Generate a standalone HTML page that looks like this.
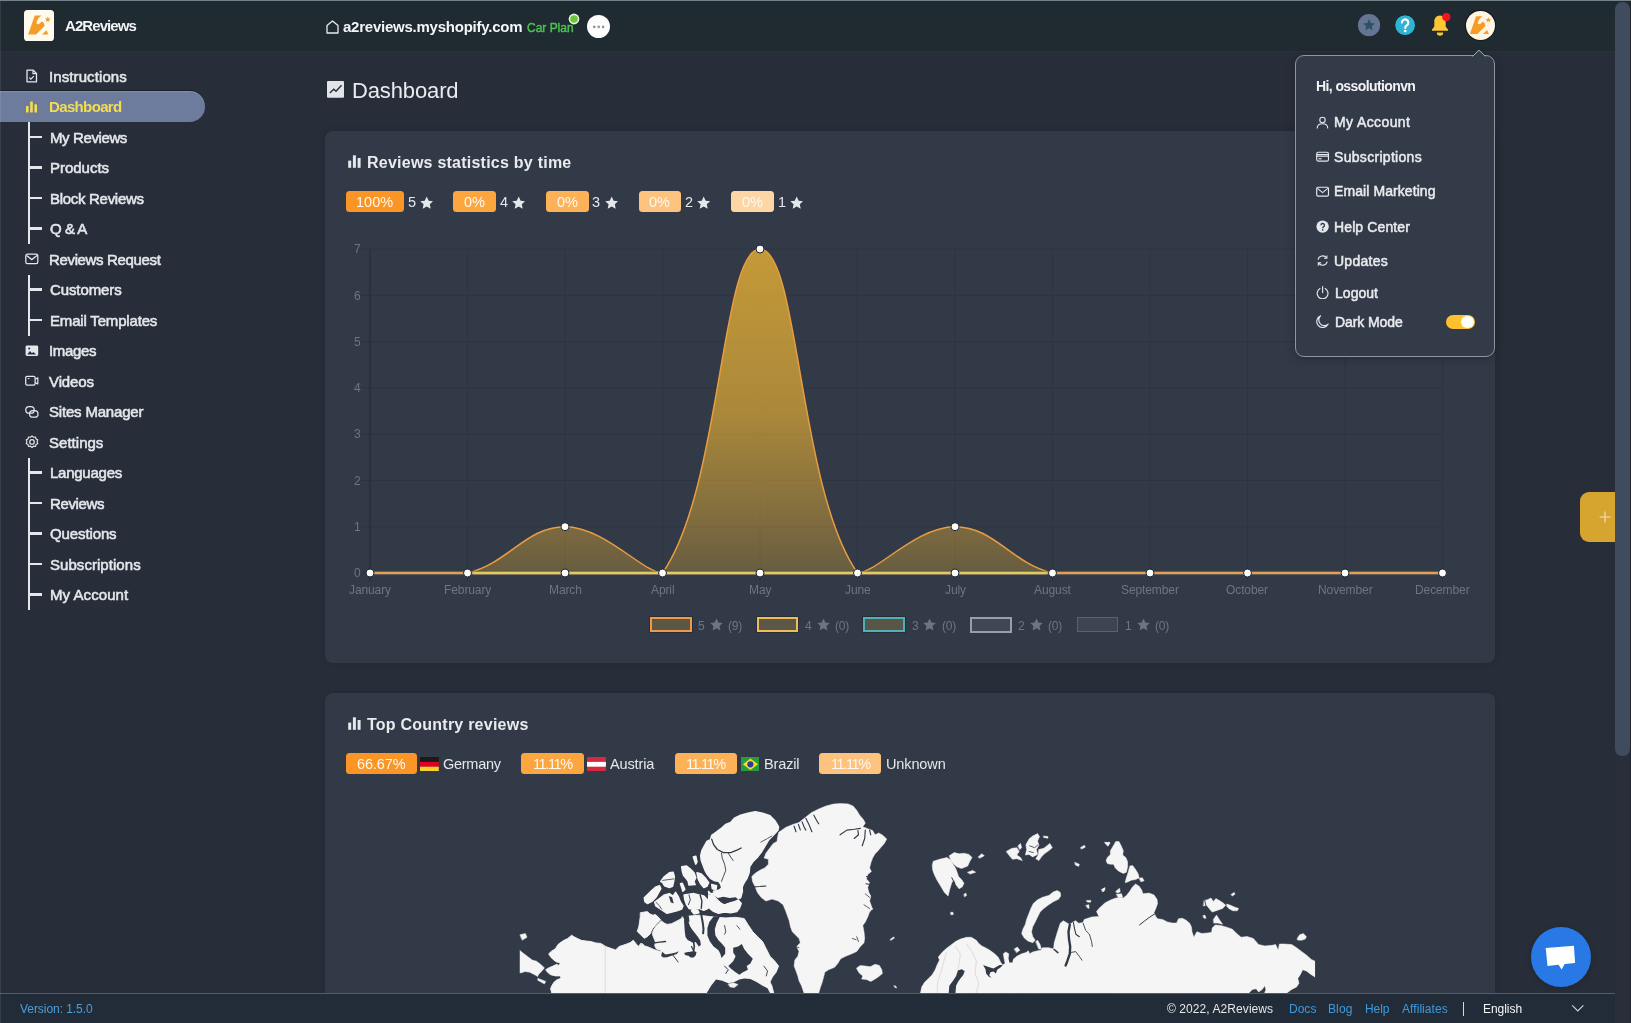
<!DOCTYPE html>
<html><head><meta charset="utf-8"><title>A2Reviews Dashboard</title>
<style>
html,body{margin:0;padding:0}
body{width:1631px;height:1023px;overflow:hidden;background:#282e39;font-family:"Liberation Sans", sans-serif;position:relative}
#root{position:absolute;left:0;top:0;width:1631px;height:1023px;overflow:hidden}
span{will-change:transform}
</style></head><body><div id="root"><div style="position:absolute;left:0px;top:0px;width:1631px;height:1px;background:#74828a;"></div><div style="position:absolute;left:0px;top:1px;width:1631px;height:50px;background:#1f2a31;"></div><div style="position:absolute;left:0px;top:51px;width:1631px;height:1px;background:#2b323d;"></div><div style="position:absolute;left:325px;top:131px;width:1170px;height:532px;background:#333a47;border-radius:8px;box-shadow:0 0 7px rgba(0,0,0,.13);"></div><div style="position:absolute;left:325px;top:693px;width:1170px;height:320px;background:#333a47;border-radius:8px 8px 0 0;box-shadow:0 0 7px rgba(0,0,0,.13);"></div><div style="position:absolute;left:23.5px;top:10.4px;width:30.8px;height:30.8px;border-radius:3.6px;background:#fffaee;overflow:hidden">
<svg width="30.8" height="30.8" viewBox="0 0 30.7 30.7"><path d="M10.7 5.5 L17.5 5.5 C14.6 7.4 13 10 12.3 13.5 L14.8 14.1 L17.6 11.5 L19.6 12.7 L20.7 15.6 L12.1 24.3 L4.1 24.3 Z" fill="#f59b27"/><path d="M18 24.3 L22.3 20.1 L24.3 24.3 Z" fill="#f59b27"/><path d="M23.7 6.5 l.85 1.85 l2.0 .22 l-1.5 1.36 l.42 2.0 l-1.77 -1.02 l-1.77 1.02 l.42 -2.0 l-1.5 -1.36 l2.0 -.22z" fill="#f59b27"/></svg></div><svg style="position:absolute;left:325.5px;top:20px" width="13" height="14" viewBox="0 0 13 14"><path d="M1 5.6 L6.5 1 L12 5.6 V13 H1 Z" fill="none" stroke="#e9ecef" stroke-width="1.3" stroke-linejoin="round"/></svg><svg style="position:absolute;left:566.5px;top:11.6px" width="14" height="14" viewBox="0 0 14 14"><circle cx="7" cy="7" r="6.3" fill="#18222a"/><circle cx="7" cy="7" r="5.4" fill="#e6f4e0"/><circle cx="7" cy="7" r="3.8" fill="#6cc63c"/></svg><div style="position:absolute;left:587px;top:14.6px;width:23.2px;height:23.2px;border-radius:50%;background:#fdfdfd"></div>
<svg style="position:absolute;left:587px;top:14.6px" width="23.2" height="23.2" viewBox="0 0 23.2 23.2"><circle cx="7.3" cy="11.9" r="1.35" fill="#96979c"/><circle cx="11.7" cy="11.9" r="1.35" fill="#96979c"/><circle cx="16.1" cy="11.9" r="1.35" fill="#96979c"/></svg><svg style="position:absolute;left:1357px;top:14px" width="24" height="24" viewBox="0 0 24 24"><circle cx="12" cy="11.2" r="11.1" fill="#647594"/><path d="M12 5.3 l1.75 3.7 l4.05 .5 l-3 2.8 l.8 4 l-3.6 -2 l-3.6 2 l.8 -4 l-3 -2.8 l4.05 -.5z" fill="#2d5162"/></svg><svg style="position:absolute;left:1393px;top:13px" width="24" height="24" viewBox="0 0 24 24"><circle cx="12.1" cy="12.2" r="10.4" fill="#2fb4d6" stroke="#17232b" stroke-width="1"/><path d="M8.9 9.6 a3.2 3.2 0 1 1 4.9 2.7 c-1.2 .8 -1.6 1.3 -1.6 2.6" fill="none" stroke="#fff" stroke-width="2.1" stroke-linecap="round"/><circle cx="12.2" cy="18" r="1.35" fill="#fff"/></svg><svg style="position:absolute;left:1429px;top:12px" width="24" height="28" viewBox="0 0 24 28"><path d="M11 3.5 c-3.6 0 -5.7 2.8 -5.7 6.2 v4.2 c0 1.2 -.9 2 -2 3 c-.8 .7 -.3 1.9 .7 1.9 h14 c1 0 1.5 -1.2 .7 -1.9 c-1.1 -1 -2 -1.8 -2 -3 v-4.2 c0 -3.4 -2.1 -6.2 -5.7 -6.2z" fill="#fdc632"/><path d="M7.8 20.6 h6.4 a3.2 3.2 0 0 1 -6.4 0z" fill="#fdc632"/><circle cx="17.3" cy="5.1" r="4.1" fill="#f4121d"/></svg><div style="position:absolute;left:1465.5px;top:11.2px;width:29px;height:29px;border-radius:50%;background:#fff5e3;box-shadow:0 0 0 1.2px #141c22;overflow:hidden">
<svg width="29" height="29" viewBox="0 0 30.7 30.7"><path d="M10.7 5.5 L17.5 5.5 C14.6 7.4 13 10 12.3 13.5 L14.8 14.1 L17.6 11.5 L19.6 12.7 L20.7 15.6 L12.1 24.3 L4.1 24.3 Z" fill="#f59b27"/><path d="M18 24.3 L22.3 20.1 L24.3 24.3 Z" fill="#f59b27"/><path d="M23.7 6.5 l.85 1.85 l2.0 .22 l-1.5 1.36 l.42 2.0 l-1.77 -1.02 l-1.77 1.02 l.42 -2.0 l-1.5 -1.36 l2.0 -.22z" fill="#f59b27"/></svg></div><div style="position:absolute;left:0px;top:91.3px;width:205px;height:30.7px;background:#6d7c9d;border-radius:0 15.3px 15.3px 0;box-shadow:0 -1px 0 rgba(12,16,28,.5), inset 0 1.2px 0 rgba(255,255,255,.13);"></div><svg style="position:absolute;left:24.7px;top:69.0px" width="14" height="14" viewBox="0 0 14 14"><path d="M2 1.2 h6.2 l3.3 3.3 v8.3 h-9.5z" fill="none" stroke="#e4e7eb" stroke-width="1.3" stroke-linejoin="round"/><path d="M8 1.4 v3.3 h3.3" fill="none" stroke="#e4e7eb" stroke-width="1.2"/><path d="M4.3 8.6 l1.6 1.6 l2.9 -3" fill="none" stroke="#e4e7eb" stroke-width="1.2"/></svg><svg style="position:absolute;left:24.7px;top:99.5px" width="14" height="14" viewBox="0 0 14 14"><rect x="1" y="6" width="2.6" height="6.6" rx=".6" fill="#f3dc52"/><rect x="5.2" y="1.6" width="2.6" height="11" rx=".6" fill="#f3dc52"/><rect x="9.4" y="4.2" width="2.6" height="8.4" rx=".6" fill="#f3dc52"/></svg><div style="position:absolute;left:30px;top:135.8px;width:12px;height:2.4px;background:#e4e7eb;"></div><div style="position:absolute;left:30px;top:166.3px;width:12px;height:2.4px;background:#e4e7eb;"></div><div style="position:absolute;left:30px;top:196.8px;width:12px;height:2.4px;background:#e4e7eb;"></div><div style="position:absolute;left:30px;top:227.3px;width:12px;height:2.4px;background:#e4e7eb;"></div><svg style="position:absolute;left:24.7px;top:252.0px" width="14" height="14" viewBox="0 0 14 14"><rect x=".8" y="2.2" width="12" height="9.4" rx="1.6" fill="none" stroke="#e4e7eb" stroke-width="1.25"/><path d="M1.6 3.6 l5.2 4 l5.2 -4" fill="none" stroke="#e4e7eb" stroke-width="1.25"/></svg><div style="position:absolute;left:30px;top:288.3px;width:12px;height:2.4px;background:#e4e7eb;"></div><div style="position:absolute;left:30px;top:318.8px;width:12px;height:2.4px;background:#e4e7eb;"></div><svg style="position:absolute;left:24.7px;top:343.5px" width="14" height="14" viewBox="0 0 14 14"><rect x=".6" y="1.6" width="12.6" height="10.4" rx="1.4" fill="#e4e7eb"/><path d="M2.2 10.4 l2.8 -3.3 l2 2.1 l1.3 -1.2 l3 2.4z" fill="#282e39"/><circle cx="4.2" cy="4.6" r="1" fill="#282e39"/></svg><svg style="position:absolute;left:24.7px;top:374.0px" width="14" height="14" viewBox="0 0 14 14"><rect x=".7" y="2.4" width="9.4" height="8.8" rx="1.4" fill="none" stroke="#e4e7eb" stroke-width="1.25"/><path d="M10.2 5.2 l2.6 -1.4 v6.2 l-2.6 -1.4" fill="none" stroke="#e4e7eb" stroke-width="1.2" stroke-linejoin="round"/><path d="M2.8 4.6 h1.6" stroke="#e4e7eb" stroke-width="1.1"/></svg><svg style="position:absolute;left:24.7px;top:404.5px" width="14" height="14" viewBox="0 0 14 14"><rect x=".8" y="1.6" width="8.4" height="6.6" rx="3.3" fill="none" stroke="#e4e7eb" stroke-width="1.25"/><rect x="4.6" y="5.6" width="8.4" height="6.6" rx="3.3" fill="none" stroke="#e4e7eb" stroke-width="1.25"/></svg><svg style="position:absolute;left:24.7px;top:435.0px" width="14" height="14" viewBox="0 0 14 14"><path d="M7 .9 l1.5 1.3 l2 -.2 l.5 1.9 l1.8 .9 l-.7 1.9 l.7 1.9 l-1.8 .9 l-.5 1.9 l-2 -.2 l-1.5 1.3 l-1.5 -1.3 l-2 .2 l-.5 -1.9 l-1.8 -.9 l.7 -1.9 l-.7 -1.9 l1.8 -.9 l.5 -1.9 l2 .2z" fill="none" stroke="#e4e7eb" stroke-width="1.15" stroke-linejoin="round"/><circle cx="7" cy="6.9" r="2.3" fill="none" stroke="#e4e7eb" stroke-width="1.15"/></svg><div style="position:absolute;left:30px;top:471.3px;width:12px;height:2.4px;background:#e4e7eb;"></div><div style="position:absolute;left:30px;top:501.8px;width:12px;height:2.4px;background:#e4e7eb;"></div><div style="position:absolute;left:30px;top:532.3px;width:12px;height:2.4px;background:#e4e7eb;"></div><div style="position:absolute;left:30px;top:562.8px;width:12px;height:2.4px;background:#e4e7eb;"></div><div style="position:absolute;left:30px;top:593.3px;width:12px;height:2.4px;background:#e4e7eb;"></div><div style="position:absolute;left:27.7px;top:122px;width:2.4px;height:122px;background:#e4e7eb;"></div><div style="position:absolute;left:27.7px;top:274.5px;width:2.4px;height:61.0px;background:#e4e7eb;"></div><div style="position:absolute;left:27.7px;top:457.5px;width:2.4px;height:152.5px;background:#e4e7eb;"></div><svg style="position:absolute;left:327.4px;top:81.1px" width="17" height="16.8" viewBox="0 0 17 16.8"><rect x="0" y="0" width="17" height="16.8" rx="1" fill="#e2e4e8"/><path d="M2.8 11.9 l4 -3.6 l2.2 2 l4.6 -5" fill="none" stroke="#282e39" stroke-width="1.4"/><circle cx="14" cy="4.8" r=".9" fill="#282e39"/></svg><svg style="position:absolute;left:347.9px;top:155.3px" width="13" height="13" viewBox="0 0 13 13"><rect x=".2" y="5.6" width="3" height="7.2" fill="#e4e7eb"/><rect x="4.9" y=".3" width="3" height="12.5" fill="#e4e7eb"/><rect x="9.6" y="3" width="3" height="9.8" fill="#e4e7eb"/></svg><div style="position:absolute;left:345.8px;top:191.2px;width:58.2px;height:21px;background:#fb9526;border-radius:3.5px;"></div><svg style="position:absolute;left:419.9px;top:195.9px" width="13.4" height="13" viewBox="0 0 13 12.6"><path d="M6.5 .4 l1.9 4.1 l4.4 .5 l-3.3 3 l.9 4.4 l-3.9 -2.2 l-3.9 2.2 l.9 -4.4 l-3.3 -3 l4.4 -.5z" fill="#e4e7eb"/></svg><div style="position:absolute;left:453.2px;top:191.2px;width:42.7px;height:21px;background:#fca640;border-radius:3.5px;"></div><svg style="position:absolute;left:511.79999999999995px;top:195.9px" width="13.4" height="13" viewBox="0 0 13 12.6"><path d="M6.5 .4 l1.9 4.1 l4.4 .5 l-3.3 3 l.9 4.4 l-3.9 -2.2 l-3.9 2.2 l.9 -4.4 l-3.3 -3 l4.4 -.5z" fill="#e4e7eb"/></svg><div style="position:absolute;left:545.9px;top:191.2px;width:42.7px;height:21px;background:#fdb258;border-radius:3.5px;"></div><svg style="position:absolute;left:604.5px;top:195.9px" width="13.4" height="13" viewBox="0 0 13 12.6"><path d="M6.5 .4 l1.9 4.1 l4.4 .5 l-3.3 3 l.9 4.4 l-3.9 -2.2 l-3.9 2.2 l.9 -4.4 l-3.3 -3 l4.4 -.5z" fill="#e4e7eb"/></svg><div style="position:absolute;left:638.6px;top:191.2px;width:42.7px;height:21px;background:#fec27f;border-radius:3.5px;"></div><svg style="position:absolute;left:697.2px;top:195.9px" width="13.4" height="13" viewBox="0 0 13 12.6"><path d="M6.5 .4 l1.9 4.1 l4.4 .5 l-3.3 3 l.9 4.4 l-3.9 -2.2 l-3.9 2.2 l.9 -4.4 l-3.3 -3 l4.4 -.5z" fill="#e4e7eb"/></svg><div style="position:absolute;left:731.3px;top:191.2px;width:42.7px;height:21px;background:#fed5a4;border-radius:3.5px;"></div><svg style="position:absolute;left:789.9px;top:195.9px" width="13.4" height="13" viewBox="0 0 13 12.6"><path d="M6.5 .4 l1.9 4.1 l4.4 .5 l-3.3 3 l.9 4.4 l-3.9 -2.2 l-3.9 2.2 l.9 -4.4 l-3.3 -3 l4.4 -.5z" fill="#e4e7eb"/></svg><svg style="position:absolute;left:0;top:0" width="1631" height="700" viewBox="0 0 1631 700"><defs><linearGradient id="g1" gradientUnits="userSpaceOnUse" x1="0" y1="249.0" x2="0" y2="573.0"><stop offset="0" stop-color="rgb(247,186,50)" stop-opacity=".74"/><stop offset=".5" stop-color="rgb(247,186,50)" stop-opacity=".615"/><stop offset=".78" stop-color="rgb(247,186,50)" stop-opacity=".43"/><stop offset="1" stop-color="rgb(247,186,50)" stop-opacity=".27"/></linearGradient></defs><line x1="360.0" y1="573.0" x2="1442.5" y2="573.0" stroke="#2e343f" stroke-width="1"/><line x1="360.0" y1="526.7" x2="1442.5" y2="526.7" stroke="#2e343f" stroke-width="1"/><line x1="360.0" y1="480.4" x2="1442.5" y2="480.4" stroke="#2e343f" stroke-width="1"/><line x1="360.0" y1="434.1" x2="1442.5" y2="434.1" stroke="#2e343f" stroke-width="1"/><line x1="360.0" y1="387.9" x2="1442.5" y2="387.9" stroke="#2e343f" stroke-width="1"/><line x1="360.0" y1="341.6" x2="1442.5" y2="341.6" stroke="#2e343f" stroke-width="1"/><line x1="360.0" y1="295.3" x2="1442.5" y2="295.3" stroke="#2e343f" stroke-width="1"/><line x1="360.0" y1="249.0" x2="1442.5" y2="249.0" stroke="#2e343f" stroke-width="1"/><line x1="370.0" y1="249.00010000000003" x2="370.0" y2="581.0" stroke="#2a303a" stroke-width="1.6"/><line x1="467.5" y1="249.00010000000003" x2="467.5" y2="581.0" stroke="#2e343f" stroke-width="1"/><line x1="565.0" y1="249.00010000000003" x2="565.0" y2="581.0" stroke="#2e343f" stroke-width="1"/><line x1="662.5" y1="249.00010000000003" x2="662.5" y2="581.0" stroke="#2e343f" stroke-width="1"/><line x1="760.0" y1="249.00010000000003" x2="760.0" y2="581.0" stroke="#2e343f" stroke-width="1"/><line x1="857.5" y1="249.00010000000003" x2="857.5" y2="581.0" stroke="#2e343f" stroke-width="1"/><line x1="955.0" y1="249.00010000000003" x2="955.0" y2="581.0" stroke="#2e343f" stroke-width="1"/><line x1="1052.5" y1="249.00010000000003" x2="1052.5" y2="581.0" stroke="#2e343f" stroke-width="1"/><line x1="1150.0" y1="249.00010000000003" x2="1150.0" y2="581.0" stroke="#2e343f" stroke-width="1"/><line x1="1247.5" y1="249.00010000000003" x2="1247.5" y2="581.0" stroke="#2e343f" stroke-width="1"/><line x1="1345.0" y1="249.00010000000003" x2="1345.0" y2="581.0" stroke="#2e343f" stroke-width="1"/><line x1="1442.5" y1="249.00010000000003" x2="1442.5" y2="581.0" stroke="#2e343f" stroke-width="1"/><path d="M370.0 573.0 C409.0 573.0 430.5 573.0 467.5 573.0 C508.5 563.3 526.0 526.7 565.0 526.7 C604.0 526.7 643.6 573.0 662.5 573.0 C721.6 488.8 721.0 249.0 760.0 249.0 C799.0 249.0 798.4 488.8 857.5 573.0 C876.4 573.0 916.0 526.7 955.0 526.7 C994.0 526.7 1011.5 563.3 1052.5 573.0 C1089.5 573.0 1111.0 573.0 1150.0 573.0 C1189.0 573.0 1208.5 573.0 1247.5 573.0 C1286.5 573.0 1306.0 573.0 1345.0 573.0 C1384.0 573.0 1403.5 573.0 1442.5 573.0 L1442.5 573.0 L370.0 573.0Z" fill="url(#g1)"/><path d="M370.0 573.0 C409.0 573.0 430.5 573.0 467.5 573.0 C508.5 563.3 526.0 526.7 565.0 526.7 C604.0 526.7 643.6 573.0 662.5 573.0 C721.6 488.8 721.0 249.0 760.0 249.0 C799.0 249.0 798.4 488.8 857.5 573.0 C876.4 573.0 916.0 526.7 955.0 526.7 C994.0 526.7 1011.5 563.3 1052.5 573.0 C1089.5 573.0 1111.0 573.0 1150.0 573.0 C1189.0 573.0 1208.5 573.0 1247.5 573.0 C1286.5 573.0 1306.0 573.0 1345.0 573.0 C1384.0 573.0 1403.5 573.0 1442.5 573.0" fill="none" stroke="#e99c40" stroke-width="1.5"/><line x1="370.0" y1="571.3" x2="1442.5" y2="571.3" stroke="#2b525c" stroke-width="1" opacity=".75"/><line x1="370.0" y1="574.7" x2="1442.5" y2="574.7" stroke="#3a5686" stroke-width="1" opacity=".55"/><line x1="370.0" y1="573.0" x2="1442.5" y2="573.0" stroke="#e6a14e" stroke-width="2.5"/><line x1="473.5" y1="573.0" x2="1046.5" y2="573.0" stroke="#e3ca5f" stroke-width="2.5"/><circle cx="370.0" cy="573.0" r="4" fill="#fff" stroke="#1c222c" stroke-width="1"/><circle cx="467.5" cy="573.0" r="4" fill="#fff" stroke="#1c222c" stroke-width="1"/><circle cx="565.0" cy="573.0" r="4" fill="#fff" stroke="#1c222c" stroke-width="1"/><circle cx="565.0" cy="526.7" r="4" fill="#fff" stroke="#1c222c" stroke-width="1"/><circle cx="662.5" cy="573.0" r="4" fill="#fff" stroke="#1c222c" stroke-width="1"/><circle cx="760.0" cy="573.0" r="4" fill="#fff" stroke="#1c222c" stroke-width="1"/><circle cx="760.0" cy="249.0" r="4" fill="#fff" stroke="#1c222c" stroke-width="1"/><circle cx="857.5" cy="573.0" r="4" fill="#fff" stroke="#1c222c" stroke-width="1"/><circle cx="955.0" cy="573.0" r="4" fill="#fff" stroke="#1c222c" stroke-width="1"/><circle cx="955.0" cy="526.7" r="4" fill="#fff" stroke="#1c222c" stroke-width="1"/><circle cx="1052.5" cy="573.0" r="4" fill="#fff" stroke="#1c222c" stroke-width="1"/><circle cx="1150.0" cy="573.0" r="4" fill="#fff" stroke="#1c222c" stroke-width="1"/><circle cx="1247.5" cy="573.0" r="4" fill="#fff" stroke="#1c222c" stroke-width="1"/><circle cx="1345.0" cy="573.0" r="4" fill="#fff" stroke="#1c222c" stroke-width="1"/><circle cx="1442.5" cy="573.0" r="4" fill="#fff" stroke="#1c222c" stroke-width="1"/></svg><div style="position:absolute;left:649.8px;top:617px;width:37.800000000000004px;height:10.8px;border:2.4px solid #ee9a46;background:#5c5644;box-shadow:0 0 0 .6px rgba(20,18,16,0.5)"></div><svg style="position:absolute;left:710.0px;top:618px" width="13" height="12.8" viewBox="0 0 13 12.6"><path d="M6.5 .4 l1.9 4.1 l4.4 .5 l-3.3 3 l.9 4.4 l-3.9 -2.2 l-3.9 2.2 l.9 -4.4 l-3.3 -3 l4.4 -.5z" fill="#6e7580"/></svg><div style="position:absolute;left:756.5px;top:617px;width:37.800000000000004px;height:10.8px;border:2.4px solid #efbc5a;background:#5c5746;box-shadow:0 0 0 .6px rgba(20,18,16,0.5)"></div><svg style="position:absolute;left:816.7px;top:618px" width="13" height="12.8" viewBox="0 0 13 12.6"><path d="M6.5 .4 l1.9 4.1 l4.4 .5 l-3.3 3 l.9 4.4 l-3.9 -2.2 l-3.9 2.2 l.9 -4.4 l-3.3 -3 l4.4 -.5z" fill="#6e7580"/></svg><div style="position:absolute;left:863.2px;top:617px;width:38.2px;height:11.2px;border:2.2px solid #4fb0ba;background:#5a5646;box-shadow:0 0 0 .6px rgba(20,18,16,0.5)"></div><svg style="position:absolute;left:923.4000000000001px;top:618px" width="13" height="12.8" viewBox="0 0 13 12.6"><path d="M6.5 .4 l1.9 4.1 l4.4 .5 l-3.3 3 l.9 4.4 l-3.9 -2.2 l-3.9 2.2 l.9 -4.4 l-3.3 -3 l4.4 -.5z" fill="#6e7580"/></svg><div style="position:absolute;left:969.9px;top:617px;width:38.6px;height:11.6px;border:2.0px solid #96a0ac;background:#404654;box-shadow:0 0 0 .6px rgba(20,18,16,0)"></div><svg style="position:absolute;left:1030.1px;top:618px" width="13" height="12.8" viewBox="0 0 13 12.6"><path d="M6.5 .4 l1.9 4.1 l4.4 .5 l-3.3 3 l.9 4.4 l-3.9 -2.2 l-3.9 2.2 l.9 -4.4 l-3.3 -3 l4.4 -.5z" fill="#6e7580"/></svg><div style="position:absolute;left:1076.6px;top:617px;width:39.6px;height:12.6px;border:1.5px solid #7d5555;background:#3e4452;box-shadow:0 0 0 .6px rgba(20,18,16,0)"></div><svg style="position:absolute;left:1136.8px;top:618px" width="13" height="12.8" viewBox="0 0 13 12.6"><path d="M6.5 .4 l1.9 4.1 l4.4 .5 l-3.3 3 l.9 4.4 l-3.9 -2.2 l-3.9 2.2 l.9 -4.4 l-3.3 -3 l4.4 -.5z" fill="#6e7580"/></svg><svg style="position:absolute;left:347.9px;top:717.3px" width="13" height="13" viewBox="0 0 13 13"><rect x=".2" y="5.6" width="3" height="7.2" fill="#e4e7eb"/><rect x="4.9" y=".3" width="3" height="12.5" fill="#e4e7eb"/><rect x="9.6" y="3" width="3" height="9.8" fill="#e4e7eb"/></svg><div style="position:absolute;left:345.8px;top:753.2px;width:71.2px;height:21px;background:#fb9526;border-radius:3.5px;"></div><div style="position:absolute;left:521px;top:753.2px;width:62.8px;height:21px;background:#fca640;border-radius:3.5px;"></div><div style="position:absolute;left:674.8px;top:753.2px;width:61.8px;height:21px;background:#fdb258;border-radius:3.5px;"></div><div style="position:absolute;left:819.1px;top:753.2px;width:62.1px;height:21px;background:#fec27f;border-radius:3.5px;"></div><svg style="position:absolute;left:420.3px;top:756.9px" width="18.8" height="14.6" viewBox="0 0 18.8 14.6"><rect width="18.8" height="4.9" fill="#1a1a1a"/><rect y="4.9" width="18.8" height="4.9" fill="#e1001f"/><rect y="9.7" width="18.8" height="4.9" fill="#f8d12e"/></svg><svg style="position:absolute;left:587.1px;top:756.9px" width="18.9" height="14.6" viewBox="0 0 18.9 14.6"><rect width="18.9" height="14.6" fill="#d8283f"/><rect y="4.9" width="18.9" height="4.8" fill="#fff"/></svg><svg style="position:absolute;left:740.7px;top:756.9px" width="18.8" height="14.6" viewBox="0 0 18.8 14.6"><rect width="18.8" height="14.6" fill="#2a9a3e"/><path d="M9.4 1.6 L17 7.3 L9.4 13 L1.8 7.3Z" fill="#f8dc2c"/><circle cx="9.4" cy="7.3" r="3.1" fill="#2b3f94"/></svg><div style="position:absolute;left:1295px;top:55px;width:198px;height:300px;border:1px solid #8d96a3;border-radius:9px;background:#333a48;box-shadow:0 2px 10px rgba(0,0,0,.25)"></div><svg style="position:absolute;left:1471px;top:49px" width="16" height="8" viewBox="0 0 16 8"><path d="M1.6 7.4 L8 1.2 L14.4 7.4" fill="#333a48" stroke="#aab2bd" stroke-width="1"/></svg><svg style="position:absolute;left:1316.4px;top:115.80000000000001px" width="13.2" height="13.2" viewBox="0 0 13.2 13.2"><circle cx="6.5" cy="4" r="2.7" fill="none" stroke="#e4e7eb" stroke-width="1.1"/><path d="M1.2 12.4 c0 -3.2 2.2 -4.6 5.3 -4.6 s5.3 1.4 5.3 4.6" fill="none" stroke="#e4e7eb" stroke-width="1.1"/></svg><svg style="position:absolute;left:1316.4px;top:149.9px" width="13.2" height="13.2" viewBox="0 0 13.2 13.2"><rect x=".7" y="2.3" width="11.8" height="8.8" rx="1.6" fill="none" stroke="#e4e7eb" stroke-width="1.15"/><path d="M.8 4.6 h11.6 M.8 6.2 h11.6" stroke="#e4e7eb" stroke-width="1.1"/><path d="M2.6 8.8 h3" stroke="#e4e7eb" stroke-width="1.2"/></svg><svg style="position:absolute;left:1316.4px;top:184.9px" width="13.2" height="13.2" viewBox="0 0 13.2 13.2"><rect x=".7" y="2.3" width="11.8" height="8.8" rx="1.3" fill="none" stroke="#e4e7eb" stroke-width="1.15"/><path d="M1.4 3.4 l5.2 4.2 l5.2 -4.2" fill="none" stroke="#e4e7eb" stroke-width="1.15"/></svg><svg style="position:absolute;left:1316.4px;top:220.0px" width="13.2" height="13.2" viewBox="0 0 13.2 13.2"><circle cx="6.6" cy="6.6" r="6.2" fill="#e4e7eb"/><path d="M4.9 5.3 a1.8 1.8 0 1 1 2.6 1.6 c-.6 .4 -.8 .7 -.8 1.3" fill="none" stroke="#333a48" stroke-width="1.3"/><circle cx="6.7" cy="9.9" r=".8" fill="#333a48"/></svg><svg style="position:absolute;left:1316.4px;top:254.4px" width="13.2" height="13.2" viewBox="0 0 13.2 13.2"><path d="M2 5.6 a4.8 4.8 0 0 1 8.6 -1.6" fill="none" stroke="#e4e7eb" stroke-width="1.15"/><path d="M11.2 7.6 a4.8 4.8 0 0 1 -8.6 1.6" fill="none" stroke="#e4e7eb" stroke-width="1.15"/><path d="M10.9 1.4 v2.9 h-2.9" fill="none" stroke="#e4e7eb" stroke-width="1.1"/><path d="M2.3 11.8 v-2.9 h2.9" fill="none" stroke="#e4e7eb" stroke-width="1.1"/></svg><svg style="position:absolute;left:1316.4px;top:286.0px" width="13.2" height="13.2" viewBox="0 0 13.2 13.2"><path d="M4 2.6 a5.4 5.4 0 1 0 5.2 0" fill="none" stroke="#e4e7eb" stroke-width="1.15" stroke-linecap="round"/><path d="M6.6 .6 v6" stroke="#e4e7eb" stroke-width="1.15" stroke-linecap="round"/></svg><svg style="position:absolute;left:1316.4px;top:315.09999999999997px" width="13.2" height="13.2" viewBox="0 0 13.2 13.2"><path d="M4.6 .9 a6 6 0 1 0 7.6 8.2 a5.4 5.4 0 0 1 -7.6 -8.2z" fill="none" stroke="#e4e7eb" stroke-width="1.15" stroke-linejoin="round"/></svg><div style="position:absolute;left:1445.6px;top:314.8px;width:29px;height:14.4px;border-radius:7.2px;background:#fdc12e"></div><div style="position:absolute;left:1461.3px;top:315.8px;width:12.4px;height:12.4px;border-radius:50%;background:#fff"></div><div style="position:absolute;left:1579.6px;top:491.6px;width:36px;height:50.6px;border-radius:9px 0 0 9px;background:#d6a530"></div><svg style="position:absolute;left:1599px;top:510.6px" width="12" height="12" viewBox="0 0 12 12"><path d="M6 .6 v10.8 M.6 6 h10.8" stroke="#f6e3b8" stroke-width="1.1"/></svg><div style="position:absolute;left:1531px;top:927px;width:60px;height:60px;border-radius:50%;background:#2878e6;box-shadow:0 1px 6px rgba(0,0,0,.2)"></div><svg style="position:absolute;left:1531px;top:927px" width="60" height="60" viewBox="0 0 60 60"><path d="M14.7 21.1 L42.9 18.7 L44.1 35.9 L33.7 37.1 L30.6 42.6 L27.5 37.7 L16.5 38.9 Z" fill="#fff"/></svg><div style="position:absolute;left:0px;top:993px;width:1615.3px;height:30px;background:#222c38;"></div><div style="position:absolute;left:0px;top:993px;width:1615.3px;height:1.2px;background:#555c68;"></div><div style="position:absolute;left:1463px;top:1001.5px;width:1.2px;height:14px;background:#d6d9dd;"></div><svg style="position:absolute;left:1571px;top:1003.5px" width="14" height="9" viewBox="0 0 14 9"><path d="M1.2 1.4 L6.8 7 L12.4 1.4" fill="none" stroke="#cfd3d8" stroke-width="1.1"/></svg><div style="position:absolute;left:1615.3px;top:52px;width:15.7px;height:971px;background:#292f3a;"></div><div style="position:absolute;left:1615.3px;top:2px;width:14.4px;height:753.5px;background:#414b5e;border-radius:7.2px;"></div><div style="position:absolute;left:1629.8px;top:1px;width:1.2px;height:1022px;background:#22252e;"></div><div style="position:absolute;left:0px;top:1px;width:1px;height:1022px;background:rgba(255,255,255,.085);"></div><svg style="position:absolute;left:0;top:780px" width="1631" height="213" viewBox="0 780 1631 213"><defs><clipPath id="mc"><rect x="519.6" y="795" width="795.6" height="198"/></clipPath></defs><g clip-path="url(#mc)" stroke-linejoin="round" stroke-linecap="round"><polygon points="519.9,934.8 525.4,933.6 527.0,937.3 522.4,940.1" fill="#f5f5f5" stroke="#f5f5f5" stroke-width="0.5"/><polygon points="519.9,950.4 522.4,952.6 527.3,956.3 532.2,960.0 536.5,961.2 541.4,964.9 544.4,967.9 541.4,971.6 538.3,974.7 537.7,976.5 534.6,974.7 529.7,972.2 524.8,971.6 521.7,972.8 519.9,972.8" fill="#f5f5f5" stroke="#f5f5f5" stroke-width="0.5"/><polygon points="538.3,978.4 545.7,981.4 544.4,983.9 537.7,980.2" fill="#f5f5f5" stroke="#f5f5f5" stroke-width="0.5"/><polygon points="551.8,993.0 550.6,988.8 551.8,985.7 554.2,982.0 557.3,979.6 561.0,978.4 560.4,975.9 555.5,975.9 550.6,974.7 547.5,972.2 545.7,969.8 548.7,967.9 553.0,966.1 556.7,964.3 558.5,965.5 560.4,963.0 556.1,961.8 553.0,959.4 550.6,956.9 548.7,953.8 551.2,951.4 554.2,949.5 556.1,947.7 557.9,944.6 561.0,942.2 564.0,940.3 567.7,938.5 571.7,935.2 573.9,936.7 577.5,938.5 581.2,940.3 586.1,941.0 591.0,941.6 595.9,943.0 600.8,943.4 605.7,946.5 610.6,948.3 615.6,949.9 619.2,946.5 622.9,945.3 626.6,944.0 630.3,942.6 633.3,940.3 635.8,943.4 638.2,946.5 641.3,943.0 641.0,946.1 642.4,943.6 644.3,945.8 649.4,947.4 653.8,949.5 658.3,950.9 662.3,951.5 660.1,950.0 656.4,948.9 654.7,945.8 655.5,942.1 654.0,938.4 652.5,934.7 652.9,931.1 655.5,926.8 658.4,923.8 661.4,920.9 664.2,923.0 667.1,924.4 671.5,923.7 675.9,921.5 678.9,920.0 682.5,917.8 681.7,917.0 685.4,917.7 689.0,916.1 698.9,915.2 706.2,916.1 716.0,917.3 725.8,917.9 735.6,917.3 744.2,918.5 747.9,924.4 752.8,931.8 757.7,936.7 762.6,941.6 766.3,948.9 770.0,956.3 774.9,961.2 778.6,966.1 776.1,972.2 772.4,977.1 770.0,982.0 771.8,985.7 773.7,993.0" fill="#f5f5f5" stroke="#f5f5f5" stroke-width="0.9"/><polygon points="640.6,912.7 647.2,911.6 650.2,914.1 653.1,915.2 655.3,914.5 658.3,917.1 660.7,919.9 656.6,923.9 653.0,928.0 651.1,931.3 650.8,933.3 647.2,936.8 644.3,938.3 641.3,935.5 637.3,931.4 638.8,926.6 639.5,922.2 640.2,917.1" fill="#f5f5f5" stroke="#f5f5f5" stroke-width="0.9"/><polyline points="654.6,942.8 659.7,942.1 665.6,941.5" fill="none" stroke="#333a47" stroke-width="1.3"/><polygon points="662.1,951.8 664.2,953.5 665.6,954.6 671.5,953.5 675.9,952.4 678.9,951.3 676.7,953.9 671.5,955.7 667.1,957.2 663.4,957.5 661.2,956.1" fill="#333a47"/><polygon points="684.0,953.1 687.7,952.0 690.6,951.8 693.6,950.9 696.5,952.0 695.8,955.3 693.6,957.5 690.6,957.5 688.4,955.7 685.5,955.3" fill="#333a47"/><polyline points="673.0,955.3 675.9,959.0 678.1,962.0" fill="none" stroke="#333a47" stroke-width="1.0"/><polygon points="684.0,920.0 686.2,919.3 688.4,921.5 689.9,925.9 692.1,929.6 695.1,933.3 698.0,936.9 700.2,940.6 700.9,945.0 698.7,946.5 695.8,942.1 692.8,942.8 690.6,941.4 687.7,939.9 685.5,936.9 684.8,931.8 684.4,925.9" fill="#333a47"/><polyline points="700.9,911.9 701.7,917.1 702.8,923.0 703.5,928.8 703.1,933.3" fill="none" stroke="#333a47" stroke-width="2.0"/><polygon points="683.1,916.3 688.8,916.0 689.5,921.9 684.6,920.9" fill="#333a47"/><polyline points="693.6,942.1 694.3,946.5 693.6,950.9" fill="none" stroke="#333a47" stroke-width="1.6"/><polygon points="713.6,916.4 719.7,917.0 716.6,923.2 714.8,929.3 715.4,935.4 718.5,940.3 722.2,944.0 725.2,947.7 725.2,953.8 721.5,958.1 720.3,953.8 718.5,950.2 713.6,946.5 709.9,941.6 707.4,935.4 707.4,928.1 709.3,922.0" fill="#333a47"/><polygon points="733.2,947.7 738.1,946.5 741.8,944.0 744.2,948.9 747.9,953.8 752.8,958.7 750.4,963.6 746.7,966.1 747.9,969.8 743.0,972.2 739.3,974.7 735.6,972.2 730.7,968.6 728.3,966.1 733.2,961.2 735.6,956.3 733.2,952.6" fill="#333a47"/><polygon points="706.8,993.0 711.1,985.7 716.0,979.6 722.2,980.8 728.3,983.3 734.4,982.0 739.3,979.6 744.2,978.4 750.4,979.0 756.5,982.0 762.6,985.7 767.5,988.2 770.0,993.0" fill="#333a47"/><polygon points="728.3,983.9 733.2,982.7 738.1,984.5 734.4,987.6 730.1,986.9" fill="#f5f5f5" stroke="#f5f5f5" stroke-width="0.5"/><polyline points="724.6,966.1 728.3,969.8 725.8,973.5" fill="none" stroke="#333a47" stroke-width="1.0"/><polyline points="763.9,966.1 767.5,971.0 766.3,975.9" fill="none" stroke="#333a47" stroke-width="0.9"/><polyline points="691.5,946.5 694.0,951.4" fill="none" stroke="#333a47" stroke-width="1.2"/><polyline points="724.6,925.6 725.8,931.8 724.6,934.2" fill="none" stroke="#333a47" stroke-width="0.9"/><polyline points="736.9,925.6 739.9,929.3" fill="none" stroke="#333a47" stroke-width="0.8"/><polygon points="778.6,826.8 774.9,820.7 770.0,815.8 762.6,813.3 755.3,811.7 747.9,813.3 740.6,815.2 734.4,818.2 730.7,822.5 725.8,824.4 720.9,828.7 716.0,832.3 711.7,835.4 710.5,839.7 706.8,841.5 704.4,845.8 701.9,850.7 700.7,855.6 701.3,860.5 703.2,865.4 705.0,870.3 707.4,874.6 710.5,878.3 714.8,880.8 719.7,881.4 718.5,886.3 713.6,888.7 708.7,891.2 708.7,893.6 713.6,894.9 718.5,897.3 723.4,897.9 728.3,898.6 733.2,897.9 738.1,898.6 740.6,896.1 741.8,891.2 742.4,886.3 744.2,882.6 746.7,878.9 749.1,872.8 749.7,866.7 752.8,861.8 757.7,856.9 761.4,852.0 765.1,845.8 768.8,839.7 773.7,834.8 778.0,829.9" fill="#f5f5f5" stroke="#f5f5f5" stroke-width="1.5"/><polyline points="711.7,839.1 713.6,844.6 717.3,849.5 723.4,852.6 730.7,852.6 736.9,850.1 741.2,848.0" fill="none" stroke="#333a47" stroke-width="1.3"/><polyline points="721.5,853.2 722.2,858.1 724.6,864.2 725.8,870.3 723.4,876.5 721.5,881.4" fill="none" stroke="#333a47" stroke-width="0.9"/><polyline points="728.3,853.2 731.4,858.1 733.2,860.5" fill="none" stroke="#333a47" stroke-width="0.9"/><polyline points="760.8,842.1 767.5,838.5 771.8,836.0" fill="none" stroke="#333a47" stroke-width="0.8"/><polygon points="706.8,882.6 713.6,881.4 719.7,883.8 720.9,887.5 717.3,891.2 711.1,893.0 706.8,888.7" fill="#333a47"/><polygon points="711.7,884.5 716.6,885.7 716.0,889.4 712.3,888.7" fill="#f5f5f5" stroke="#f5f5f5" stroke-width="1.5"/><polygon points="708.7,894.9 713.6,896.1 718.5,901.0 723.4,904.7 728.3,903.5 733.2,901.0 738.1,899.8 741.2,903.5 739.3,908.4 736.9,911.4 730.7,912.7 724.6,912.0 718.5,913.3 713.6,911.4 709.9,908.4 708.7,902.2" fill="#f5f5f5" stroke="#f5f5f5" stroke-width="1.5"/><polygon points="713.6,891.2 725.8,888.7 738.1,888.1 741.8,885.1 742.4,891.2 740.6,897.9 733.2,898.6 725.8,898.8 718.5,897.6" fill="#f5f5f5" stroke="#f5f5f5" stroke-width="1.5"/><polygon points="717.9,897.9 723.4,896.7 729.5,897.9 735.6,897.3 738.1,899.2 734.4,901.0 729.5,902.2 724.6,904.1 720.9,902.2" fill="#333a47"/><polygon points="681.7,866.7 686.6,866.1 690.3,869.1 694.0,872.8 695.8,877.7 694.0,881.4 689.0,882.6 686.6,878.9 683.5,875.3 682.3,871.0" fill="#f5f5f5" stroke="#f5f5f5" stroke-width="1.5"/><polygon points="697.0,872.8 701.3,874.0 705.0,877.7 708.7,882.6 706.8,886.3 703.8,887.5 700.7,883.8 698.2,878.9" fill="#f5f5f5" stroke="#f5f5f5" stroke-width="1.5"/><polygon points="693.3,856.9 695.8,856.2 697.0,861.8 695.8,864.2" fill="#f5f5f5" stroke="#f5f5f5" stroke-width="1.5"/><polygon points="664.5,876.5 669.4,872.8 673.1,872.2 674.3,876.5 673.7,881.4 672.5,886.3 669.4,887.5 664.5,885.7 662.7,882.6 660.8,881.4" fill="#f5f5f5" stroke="#f5f5f5" stroke-width="1.5"/><polyline points="662.7,880.4 673.7,878.9" fill="none" stroke="#333a47" stroke-width="0.8"/><polygon points="644.3,897.9 647.4,894.9 652.3,890.0 655.9,886.9 659.6,885.7 660.8,888.7 658.4,893.0 655.9,897.3 652.3,901.0 647.4,903.5 644.9,901.6" fill="#f5f5f5" stroke="#f5f5f5" stroke-width="1.5"/><polygon points="680.5,883.8 682.3,883.2 684.8,889.4 682.9,891.2" fill="#f5f5f5" stroke="#f5f5f5" stroke-width="1.5"/><polygon points="688.4,882.6 694.0,882.0 695.2,884.5 689.0,885.1" fill="#f5f5f5" stroke="#f5f5f5" stroke-width="1.5"/><polygon points="654.7,902.2 659.6,898.6 664.5,894.9 669.4,893.6 673.1,896.1 675.6,892.4 678.0,896.1 680.5,902.2 682.9,905.9 681.7,909.0 676.8,910.8 671.9,912.0 667.0,913.3 663.3,910.8 659.6,908.4 655.9,905.9" fill="#f5f5f5" stroke="#f5f5f5" stroke-width="1.5"/><polygon points="668.8,896.1 672.1,897.3 673.7,903.5 670.7,902.2" fill="#333a47"/><polyline points="655.9,902.2 659.6,905.9 661.5,909.0" fill="none" stroke="#333a47" stroke-width="0.8"/><polygon points="684.1,894.9 689.0,894.3 694.0,893.6 698.9,894.9 703.8,896.1 707.4,899.8 708.7,904.7 708.1,908.4 703.8,910.2 698.9,908.4 694.0,909.6 689.0,908.4 686.6,904.7 684.8,899.8" fill="#f5f5f5" stroke="#f5f5f5" stroke-width="1.5"/><polyline points="700.1,894.9 701.9,901.0 701.3,908.4" fill="none" stroke="#333a47" stroke-width="1.4"/><polyline points="689.0,894.9 690.3,899.8 688.4,904.7" fill="none" stroke="#333a47" stroke-width="0.9"/><polygon points="691.5,910.8 697.6,910.2 698.9,912.7 694.0,913.9" fill="#f5f5f5" stroke="#f5f5f5" stroke-width="1.5"/><polygon points="778.8,832.3 785.6,827.4 792.9,824.4 799.0,822.5 805.2,817.6 811.3,812.7 818.7,809.0 826.0,806.0 833.4,804.1 840.7,803.5 848.1,803.9 853.0,806.0 856.7,810.3 859.7,815.2 863.4,819.5 865.3,823.1 862.8,826.8 867.7,828.7 872.6,830.5 875.1,834.8 878.8,832.9 883.0,835.4 886.7,839.1 884.3,843.4 881.2,847.0 878.1,850.7 875.1,853.8 872.6,858.1 870.8,863.0 869.6,867.9 871.4,871.6 867.7,874.6 866.5,878.9 869.6,882.6 867.7,887.5 868.9,892.4 870.8,896.1 869.6,901.0 871.4,905.9 872.6,909.6 872.6,908.5 869.6,912.1 867.7,917.0 865.3,922.0 862.8,925.6 864.0,931.8 864.7,937.9 864.0,942.8 860.4,946.5 856.7,951.4 851.8,953.8 845.6,956.3 840.7,958.7 837.7,963.6 834.6,967.3 828.5,969.8 824.8,972.2 823.6,977.1 822.3,982.0 820.5,986.9 818.7,993.0 804.0,993.0 801.5,985.7 799.0,980.8 797.8,975.9 796.0,971.0 794.1,966.1 794.8,960.0 797.8,956.3 799.0,951.4 796.6,946.5 800.3,942.8 799.0,938.5 795.4,934.8 792.3,931.8 790.5,926.9 789.2,920.7 787.4,915.7 785.6,910.8 783.1,904.7 778.2,901.0 772.1,899.1 765.9,901.0 761.0,897.3 757.4,892.4 754.9,886.3 752.5,881.4 751.8,876.5 754.9,873.4 759.8,870.3 764.7,867.9 768.4,864.2 768.4,859.3 764.1,858.1 765.9,853.2 769.6,848.3 773.3,843.4 777.0,841.5 777.6,837.2" fill="#f5f5f5" stroke="#f5f5f5" stroke-width="0.5"/><polyline points="805.8,818.2 808.9,824.4 811.9,831.7" fill="none" stroke="#333a47" stroke-width="1.15"/><polyline points="802.1,821.9 804.0,826.8 805.8,830.1" fill="none" stroke="#333a47" stroke-width="1.15"/><polyline points="798.4,824.4 800.3,829.9" fill="none" stroke="#333a47" stroke-width="1.15"/><polyline points="794.1,826.2 796.0,831.7" fill="none" stroke="#333a47" stroke-width="1.15"/><polyline points="813.8,815.2 816.8,820.7 818.7,823.8" fill="none" stroke="#333a47" stroke-width="1.15"/><polyline points="840.1,834.8 846.9,830.1 854.2,829.3 860.4,828.4" fill="none" stroke="#333a47" stroke-width="1.15"/><polyline points="857.9,830.5 858.5,834.8 854.2,838.5" fill="none" stroke="#333a47" stroke-width="1.15"/><polyline points="865.3,830.1 864.7,838.5 862.2,845.8" fill="none" stroke="#333a47" stroke-width="1.15"/><polyline points="869.6,830.1 870.8,834.8" fill="none" stroke="#333a47" stroke-width="1.15"/><polyline points="753.1,886.9 759.8,886.5 765.9,886.0" fill="none" stroke="#333a47" stroke-width="1.15"/><polyline points="866.5,876.5 871.4,877.7" fill="none" stroke="#333a47" stroke-width="1.15"/><polyline points="865.9,883.8 870.8,884.5" fill="none" stroke="#333a47" stroke-width="1.15"/><polyline points="856.7,936.7 858.5,941.6" fill="none" stroke="#333a47" stroke-width="0.8"/><polyline points="852.4,938.5 856.1,939.7" fill="none" stroke="#333a47" stroke-width="0.8"/><polyline points="792.3,938.5 798.4,940.3" fill="none" stroke="#333a47" stroke-width="0.8"/><polyline points="795.4,946.5 799.0,947.7" fill="none" stroke="#333a47" stroke-width="0.8"/><polyline points="865.3,893.8 869.6,897.4" fill="none" stroke="#333a47" stroke-width="0.8"/><polyline points="864.0,904.8 869.6,908.5" fill="none" stroke="#333a47" stroke-width="0.8"/><polygon points="856.7,967.9 860.4,965.5 865.3,966.1 870.2,966.7 875.1,964.3 879.4,965.5 881.8,969.8 882.4,973.5 878.8,976.5 875.1,979.0 870.8,981.4 866.5,979.6 861.6,979.0 862.8,975.9 859.7,973.5 857.9,971.0" fill="#f5f5f5" stroke="#f5f5f5" stroke-width="0.5"/><polygon points="890.2,939.4 893.5,936.9 894.5,937.9 891.0,940.3" fill="#f5f5f5" stroke="#f5f5f5" stroke-width="0.5"/><polygon points="894.1,985.7 895.7,986.0 896.7,987.9 895.2,987.6" fill="#f5f5f5" stroke="#f5f5f5" stroke-width="0.5"/><polygon points="933.4,861.2 939.5,859.3 946.9,857.5 950.6,859.9 953.0,864.2 955.5,867.9 957.3,872.8 958.5,876.5 961.6,879.6 964.0,883.2 962.2,886.9 959.1,888.8 956.1,885.1 954.2,880.2 951.8,882.6 949.9,888.8 948.1,896.1 944.4,892.4 940.8,886.3 937.1,880.2 934.6,875.3 932.8,870.4 932.2,865.5" fill="#f5f5f5" stroke="#f5f5f5" stroke-width="0.5"/><polygon points="949.3,855.7 954.2,852.6 959.1,853.8 964.0,853.2 969.0,854.4 972.0,857.5 969.6,861.8 967.7,866.1 961.6,868.5 956.7,866.7 953.0,863.6 950.6,859.9" fill="#f5f5f5" stroke="#f5f5f5" stroke-width="0.5"/><polyline points="951.8,877.7 954.2,882.6 953.0,886.3" fill="none" stroke="#333a47" stroke-width="1.0"/><polygon points="978.2,856.9 981.8,853.8 984.3,855.7 980.0,858.1" fill="#f5f5f5" stroke="#f5f5f5" stroke-width="0.5"/><polygon points="967.7,872.2 972.6,870.4 975.7,872.2 970.2,874.0" fill="#f5f5f5" stroke="#f5f5f5" stroke-width="0.5"/><polygon points="964.0,894.3 965.9,893.1 966.5,895.5 964.7,896.7" fill="#f5f5f5" stroke="#f5f5f5" stroke-width="0.5"/><polygon points="950.8,912.3 953.0,912.3 953.3,914.5 951.1,914.8" fill="#f5f5f5" stroke="#f5f5f5" stroke-width="0.5"/><polygon points="1006.4,851.4 1011.9,848.3 1016.8,847.7 1019.2,851.4 1016.8,855.0 1020.5,857.5 1022.3,860.6 1016.8,858.7 1012.5,859.3 1009.4,855.7" fill="#f5f5f5" stroke="#f5f5f5" stroke-width="0.5"/><polygon points="1018.0,845.8 1020.5,843.4 1021.7,847.7 1019.8,849.5" fill="#f5f5f5" stroke="#f5f5f5" stroke-width="0.5"/><polygon points="1026.0,844.6 1029.0,839.1 1032.7,836.0 1037.6,833.6 1039.5,836.6 1037.6,840.9 1038.9,845.2 1036.4,849.5 1037.6,854.4 1032.7,856.9 1029.0,854.4 1025.4,855.0 1026.6,850.1" fill="#f5f5f5" stroke="#f5f5f5" stroke-width="0.5"/><polygon points="1038.9,849.5 1043.8,848.3 1049.9,843.4 1052.3,847.7 1048.7,850.8 1044.4,853.8 1041.3,857.1 1038.9,860.6 1035.8,858.7 1038.2,855.0" fill="#f5f5f5" stroke="#f5f5f5" stroke-width="0.5"/><polygon points="1043.8,836.0 1048.0,836.6 1048.0,838.2 1043.8,837.5" fill="#f5f5f5" stroke="#f5f5f5" stroke-width="0.5"/><polyline points="1029.7,845.8 1034.6,847.7 1037.6,845.2" fill="none" stroke="#333a47" stroke-width="0.8"/><polyline points="1029.0,851.4 1033.3,852.6" fill="none" stroke="#333a47" stroke-width="0.8"/><polygon points="1080.5,847.7 1084.2,845.2 1085.4,847.1 1081.8,848.9" fill="#f5f5f5" stroke="#f5f5f5" stroke-width="0.5"/><polygon points="1075.0,862.4 1079.3,864.2 1078.7,866.4 1075.4,864.9" fill="#f5f5f5" stroke="#f5f5f5" stroke-width="0.5"/><polygon points="1105.1,842.2 1110.0,843.1 1108.1,845.8" fill="#f5f5f5" stroke="#f5f5f5" stroke-width="0.5"/><polygon points="1102.0,889.4 1105.1,887.8 1104.5,890.6 1102.6,891.8" fill="#f5f5f5" stroke="#f5f5f5" stroke-width="0.5"/><polygon points="1086.7,900.4 1091.0,900.4 1090.4,902.3 1087.3,902.0" fill="#f5f5f5" stroke="#f5f5f5" stroke-width="0.5"/><polygon points="1086.1,905.3 1088.9,904.7 1089.1,908.4 1087.3,907.8" fill="#f5f5f5" stroke="#f5f5f5" stroke-width="0.5"/><polygon points="1053.6,891.8 1057.2,890.6 1060.3,892.4 1060.7,896.1 1058.5,899.2 1053.6,901.6 1048.7,904.7 1043.8,908.4 1040.1,912.1 1037.6,917.0 1035.2,921.9 1032.7,926.8 1031.5,931.7 1032.7,936.6 1035.2,940.3 1032.7,942.7 1027.8,940.9 1024.1,937.8 1021.7,933.5 1022.9,929.2 1025.4,924.3 1026.6,919.4 1029.0,913.3 1030.9,908.4 1033.3,903.5 1037.6,899.8 1042.5,897.3 1048.7,895.5" fill="#f5f5f5" stroke="#f5f5f5" stroke-width="0.5"/><polygon points="1035.8,941.6 1037.6,940.3 1040.1,944.6 1041.3,948.9 1038.9,948.9" fill="#f5f5f5" stroke="#f5f5f5" stroke-width="0.5"/><polygon points="920.5,993.0 921.7,986.9 924.8,982.0 928.5,978.4 932.2,974.7 935.2,969.8 937.1,964.9 939.5,960.0 938.3,956.9 942.0,952.6 945.7,948.9 950.6,945.3 955.5,941.6 960.4,939.1 966.5,937.3 971.4,937.3 976.3,940.3 978.8,943.4 981.8,945.9 985.5,947.7 989.8,950.2 994.7,953.8 998.4,957.5 1000.8,962.4 1002.7,964.9 1005.1,963.6 1003.9,957.5 1003.3,953.8 1005.7,952.0 1008.8,953.8 1008.2,958.7 1010.0,961.8 1013.1,959.4 1016.8,956.3 1021.7,953.8 1026.0,952.6 1028.4,950.8 1029.7,953.8 1032.7,952.0 1037.6,950.8 1040.7,950.2 1042.5,947.7 1048.7,947.7 1053.6,948.9 1054.2,942.8 1056.0,936.7 1057.9,930.5 1060.3,923.2 1063.4,920.7 1066.4,922.6 1069.5,924.4 1073.2,922.0 1075.6,920.7 1078.7,923.2 1083.0,922.6 1084.2,919.5 1091.6,917.0 1098.9,916.4 1096.5,911.5 1098.9,908.5 1104.9,902.9 1111.0,899.8 1115.9,898.0 1123.3,898.0 1126.4,895.5 1129.4,891.8 1132.5,886.9 1135.6,883.9 1139.2,886.3 1141.7,890.0 1142.9,893.7 1149.0,893.1 1154.0,894.9 1157.0,899.2 1157.6,903.5 1155.8,908.4 1154.0,912.7 1155.8,916.4 1157.6,918.8 1162.5,919.4 1167.4,921.9 1172.3,923.1 1176.6,923.1 1178.5,918.8 1182.2,918.2 1185.8,920.0 1189.5,923.1 1191.4,926.8 1192.0,931.7 1193.8,937.2 1196.9,931.7 1201.8,933.5 1207.9,932.9 1211.6,932.3 1212.2,928.0 1215.3,924.9 1220.8,925.6 1227.5,927.4 1232.4,929.2 1236.1,932.9 1241.0,937.2 1247.1,936.6 1253.3,938.4 1258.6,944.6 1264.7,945.9 1272.1,945.3 1275.7,944.6 1278.2,950.2 1279.4,944.0 1284.3,944.0 1291.7,944.6 1296.6,947.7 1301.5,951.4 1306.4,955.1 1311.3,959.4 1315.0,961.2 1315.0,977.1 1311.3,974.7 1306.4,971.0 1302.7,969.8 1300.3,974.7 1297.8,978.4 1299.0,983.3 1296.6,986.9 1291.7,989.4 1286.8,993.0 1264.7,993.0 1265.9,989.4 1264.7,985.7 1262.2,989.4 1258.6,991.9 1256.1,988.8 1252.4,989.4 1248.8,993.0" fill="#f5f5f5" stroke="#f5f5f5" stroke-width="0.5"/><polygon points="983.1,964.9 988.6,967.1 993.5,968.6 996.5,966.7 999.6,964.9 1002.7,965.1 1000.8,967.3 997.2,969.8 995.9,973.5 993.5,971.6 990.4,972.2 989.2,975.3 991.6,977.7 988.6,976.5 986.1,973.5 985.5,969.2" fill="#333a47"/><polygon points="1008.8,959.4 1013.1,958.7 1012.5,962.4 1009.4,962.4" fill="#333a47"/><polygon points="1014.3,948.9 1017.4,947.1 1019.8,950.2 1016.8,952.6" fill="#f5f5f5" stroke="#f5f5f5" stroke-width="0.5"/><polygon points="957.9,970.4 961.6,969.2 964.7,971.0 963.4,974.7 960.4,978.4 957.9,982.0 956.1,985.7 955.5,993.0 948.7,993.0 949.3,985.7 953.0,980.8 956.1,975.9" fill="#333a47"/><polyline points="1069.8,924.7 1068.5,931.8 1069.0,939.1 1070.2,946.5 1069.8,953.8 1067.3,961.2 1065.6,965.5" fill="none" stroke="#333a47" stroke-width="2.4"/><polyline points="1070.2,952.6 1075.6,951.6 1079.3,956.3 1082.0,960.2" fill="none" stroke="#333a47" stroke-width="0.9"/><polyline points="1073.4,922.6 1074.7,929.3 1075.9,934.2 1079.3,936.7" fill="none" stroke="#333a47" stroke-width="1.1"/><polyline points="1083.2,923.4 1085.7,930.5 1089.4,934.2 1091.6,941.6 1092.3,946.5" fill="none" stroke="#333a47" stroke-width="0.9"/><polyline points="1054.2,949.5 1057.9,952.6" fill="none" stroke="#333a47" stroke-width="1.6"/><polyline points="1155.4,913.5 1149.0,917.6 1144.1,921.3 1139.5,924.9" fill="none" stroke="#333a47" stroke-width="1.0"/><polyline points="946.3,952.6 943.8,961.2 941.4,971.0 937.7,982.0 937.1,993.0" fill="none" stroke="#c9cbce" stroke-width="0.6"/><polyline points="955.5,946.5 960.4,953.8 959.1,963.6 957.9,969.8" fill="none" stroke="#c9cbce" stroke-width="0.6"/><polyline points="966.5,944.0 972.6,952.6 976.3,961.2 975.1,973.5 978.8,983.3 976.3,993.0" fill="none" stroke="#c9cbce" stroke-width="0.6"/><polygon points="1104.9,842.8 1109.8,842.2 1108.0,845.8" fill="#f5f5f5" stroke="#f5f5f5" stroke-width="0.5"/><polygon points="1115.9,841.6 1119.0,841.6 1121.5,846.5 1123.3,850.8 1122.7,855.0 1125.8,857.5 1127.6,861.8 1127.6,866.7 1126.4,872.2 1123.3,873.4 1118.4,871.0 1115.3,867.9 1113.5,864.2 1110.4,864.2 1107.4,863.6 1106.1,860.6 1107.4,857.5 1110.4,854.4 1110.4,850.8 1112.9,846.5" fill="#f5f5f5" stroke="#f5f5f5" stroke-width="0.5"/><polygon points="1130.0,866.1 1132.5,865.5 1134.9,868.5 1138.0,873.4 1139.2,877.7 1135.6,879.6 1131.3,880.2 1127.6,882.0 1125.1,882.6 1126.4,877.7 1128.2,872.2" fill="#f5f5f5" stroke="#f5f5f5" stroke-width="0.5"/><polygon points="1139.2,878.3 1142.3,877.7 1144.1,880.8 1141.1,881.7" fill="#f5f5f5" stroke="#f5f5f5" stroke-width="0.5"/><polygon points="1101.8,889.4 1104.9,887.8 1103.7,891.2" fill="#f5f5f5" stroke="#f5f5f5" stroke-width="0.5"/><polygon points="1115.9,891.2 1119.6,888.2 1120.2,891.8 1117.2,893.1" fill="#f5f5f5" stroke="#f5f5f5" stroke-width="0.5"/><polygon points="1116.6,894.3 1121.5,893.7 1122.7,897.3 1118.4,898.0" fill="#f5f5f5" stroke="#f5f5f5" stroke-width="0.5"/><polygon points="1204.2,900.4 1207.3,899.8 1211.0,898.0 1213.4,901.6 1215.9,898.6 1220.2,901.0 1223.9,903.5 1225.7,905.3 1222.6,908.4 1217.7,910.2 1212.2,912.1 1209.1,908.4 1206.7,905.3 1203.6,905.9" fill="#f5f5f5" stroke="#f5f5f5" stroke-width="0.5"/><polygon points="1226.9,904.1 1230.6,905.3 1234.9,907.2 1238.6,908.4 1237.3,910.8 1233.0,910.8 1229.4,909.0 1226.9,906.5" fill="#f5f5f5" stroke="#f5f5f5" stroke-width="0.5"/><polygon points="1213.4,919.4 1216.5,915.1 1219.6,920.0 1222.6,924.3 1217.7,923.1 1214.0,923.1" fill="#f5f5f5" stroke="#f5f5f5" stroke-width="0.5"/><polygon points="1203.0,915.7 1204.8,915.1 1206.1,918.2 1204.2,918.2" fill="#f5f5f5" stroke="#f5f5f5" stroke-width="0.5"/><polygon points="1231.2,894.3 1234.3,892.4 1234.9,894.3 1232.4,895.9" fill="#f5f5f5" stroke="#f5f5f5" stroke-width="0.5"/><polyline points="1204.8,900.4 1205.7,905.3" fill="none" stroke="#333a47" stroke-width="0.9"/><polygon points="1297.2,938.5 1299.6,934.8 1303.3,933.6 1306.4,936.7 1305.2,939.1 1301.5,940.3 1297.8,940.1" fill="#f5f5f5" stroke="#f5f5f5" stroke-width="0.5"/><line x1="605.2" y1="946" x2="605.2" y2="993" stroke="#c9cbce" stroke-width=".6"/></g></svg><span style="position:absolute;top:18px;font-size:15px;line-height:1;font-weight:700;color:#f1f3f5;white-space:nowrap;left:65px;letter-spacing:-0.924px;">A2Reviews</span><span style="position:absolute;top:19px;font-size:15px;line-height:1;font-weight:700;color:#f4f5f7;white-space:nowrap;left:342.8px;letter-spacing:-0.240px;">a2reviews.myshopify.com</span><span style="position:absolute;top:22px;font-size:12px;line-height:1;font-weight:400;color:#4cc153;white-space:nowrap;left:526.7px;letter-spacing:-0.011px;-webkit-text-stroke:.45px #4cc153;">Car Plan</span><span style="position:absolute;top:69px;font-size:15px;line-height:1;font-weight:400;color:#e4e7eb;white-space:nowrap;left:49.3px;letter-spacing:0.100px;-webkit-text-stroke:.55px #e4e7eb;">Instructions</span><span style="position:absolute;top:99px;font-size:15px;line-height:1;font-weight:700;color:#f3dc52;white-space:nowrap;left:49.3px;letter-spacing:-0.640px;">Dashboard</span><span style="position:absolute;top:130px;font-size:15px;line-height:1;font-weight:400;color:#e4e7eb;white-space:nowrap;left:50.3px;letter-spacing:-0.386px;-webkit-text-stroke:.55px #e4e7eb;">My Reviews</span><span style="position:absolute;top:160px;font-size:15px;line-height:1;font-weight:400;color:#e4e7eb;white-space:nowrap;left:50.3px;letter-spacing:-0.025px;-webkit-text-stroke:.55px #e4e7eb;">Products</span><span style="position:absolute;top:191px;font-size:15px;line-height:1;font-weight:400;color:#e4e7eb;white-space:nowrap;left:50.3px;letter-spacing:-0.295px;-webkit-text-stroke:.55px #e4e7eb;">Block Reviews</span><span style="position:absolute;top:221px;font-size:15px;line-height:1;font-weight:400;color:#e4e7eb;white-space:nowrap;left:50.3px;letter-spacing:-0.478px;-webkit-text-stroke:.55px #e4e7eb;">Q & A</span><span style="position:absolute;top:252px;font-size:15px;line-height:1;font-weight:400;color:#e4e7eb;white-space:nowrap;left:49.3px;letter-spacing:-0.348px;-webkit-text-stroke:.55px #e4e7eb;">Reviews Request</span><span style="position:absolute;top:282px;font-size:15px;line-height:1;font-weight:400;color:#e4e7eb;white-space:nowrap;left:50.3px;letter-spacing:-0.103px;-webkit-text-stroke:.55px #e4e7eb;">Customers</span><span style="position:absolute;top:313px;font-size:15px;line-height:1;font-weight:400;color:#e4e7eb;white-space:nowrap;left:50.3px;letter-spacing:-0.172px;-webkit-text-stroke:.55px #e4e7eb;">Email Templates</span><span style="position:absolute;top:343px;font-size:15px;line-height:1;font-weight:400;color:#e4e7eb;white-space:nowrap;left:49.3px;letter-spacing:-0.317px;-webkit-text-stroke:.55px #e4e7eb;">Images</span><span style="position:absolute;top:374px;font-size:15px;line-height:1;font-weight:400;color:#e4e7eb;white-space:nowrap;left:49.3px;letter-spacing:-0.099px;-webkit-text-stroke:.55px #e4e7eb;">Videos</span><span style="position:absolute;top:404px;font-size:15px;line-height:1;font-weight:400;color:#e4e7eb;white-space:nowrap;left:49.3px;letter-spacing:-0.186px;-webkit-text-stroke:.55px #e4e7eb;">Sites Manager</span><span style="position:absolute;top:435px;font-size:15px;line-height:1;font-weight:400;color:#e4e7eb;white-space:nowrap;left:49.3px;letter-spacing:0.025px;-webkit-text-stroke:.55px #e4e7eb;">Settings</span><span style="position:absolute;top:465px;font-size:15px;line-height:1;font-weight:400;color:#e4e7eb;white-space:nowrap;left:50.3px;letter-spacing:-0.250px;-webkit-text-stroke:.55px #e4e7eb;">Languages</span><span style="position:absolute;top:496px;font-size:15px;line-height:1;font-weight:400;color:#e4e7eb;white-space:nowrap;left:50.3px;letter-spacing:-0.384px;-webkit-text-stroke:.55px #e4e7eb;">Reviews</span><span style="position:absolute;top:526px;font-size:15px;line-height:1;font-weight:400;color:#e4e7eb;white-space:nowrap;left:50.3px;letter-spacing:-0.116px;-webkit-text-stroke:.55px #e4e7eb;">Questions</span><span style="position:absolute;top:557px;font-size:15px;line-height:1;font-weight:400;color:#e4e7eb;white-space:nowrap;left:50.3px;letter-spacing:0.050px;-webkit-text-stroke:.55px #e4e7eb;">Subscriptions</span><span style="position:absolute;top:587px;font-size:15px;line-height:1;font-weight:400;color:#e4e7eb;white-space:nowrap;left:50.3px;letter-spacing:0.065px;-webkit-text-stroke:.55px #e4e7eb;">My Account</span><span style="position:absolute;top:80px;font-size:22px;line-height:1;font-weight:400;color:#e9ebee;white-space:nowrap;left:352.1px;letter-spacing:-0.127px;">Dashboard</span><span style="position:absolute;top:155px;font-size:16px;line-height:1;font-weight:700;color:#e9ebee;white-space:nowrap;left:366.5px;letter-spacing:0.238px;">Reviews statistics by time</span><span style="position:absolute;top:195px;font-size:14.5px;line-height:1;font-weight:400;color:#fff8ee;white-space:nowrap;left:356px;">100%</span><span style="position:absolute;top:195px;font-size:14.5px;line-height:1;font-weight:400;color:#e4e7eb;white-space:nowrap;left:407.6px;">5</span><span style="position:absolute;top:195px;font-size:14.5px;line-height:1;font-weight:400;color:#fff8ee;white-space:nowrap;left:464px;">0%</span><span style="position:absolute;top:195px;font-size:14.5px;line-height:1;font-weight:400;color:#e4e7eb;white-space:nowrap;left:499.5px;">4</span><span style="position:absolute;top:195px;font-size:14.5px;line-height:1;font-weight:400;color:#fff8ee;white-space:nowrap;left:557px;">0%</span><span style="position:absolute;top:195px;font-size:14.5px;line-height:1;font-weight:400;color:#e4e7eb;white-space:nowrap;left:592.2px;">3</span><span style="position:absolute;top:195px;font-size:14.5px;line-height:1;font-weight:400;color:#fff8ee;white-space:nowrap;left:649px;">0%</span><span style="position:absolute;top:195px;font-size:14.5px;line-height:1;font-weight:400;color:#e4e7eb;white-space:nowrap;left:684.9000000000001px;">2</span><span style="position:absolute;top:195px;font-size:14.5px;line-height:1;font-weight:400;color:#fff8ee;white-space:nowrap;left:742px;">0%</span><span style="position:absolute;top:195px;font-size:14.5px;line-height:1;font-weight:400;color:#e4e7eb;white-space:nowrap;left:777.6px;">1</span><span style="position:absolute;top:567px;font-size:12px;line-height:1;font-weight:400;color:#6e7580;white-space:nowrap;left:354px;">0</span><span style="position:absolute;top:521px;font-size:12px;line-height:1;font-weight:400;color:#6e7580;white-space:nowrap;left:354px;">1</span><span style="position:absolute;top:475px;font-size:12px;line-height:1;font-weight:400;color:#6e7580;white-space:nowrap;left:354px;">2</span><span style="position:absolute;top:428px;font-size:12px;line-height:1;font-weight:400;color:#6e7580;white-space:nowrap;left:354px;">3</span><span style="position:absolute;top:382px;font-size:12px;line-height:1;font-weight:400;color:#6e7580;white-space:nowrap;left:354px;">4</span><span style="position:absolute;top:336px;font-size:12px;line-height:1;font-weight:400;color:#6e7580;white-space:nowrap;left:354px;">5</span><span style="position:absolute;top:290px;font-size:12px;line-height:1;font-weight:400;color:#6e7580;white-space:nowrap;left:354px;">6</span><span style="position:absolute;top:243px;font-size:12px;line-height:1;font-weight:400;color:#6e7580;white-space:nowrap;left:354px;">7</span><span style="position:absolute;top:584px;font-size:12px;line-height:1;font-weight:400;color:#6e7580;white-space:nowrap;left:349px;letter-spacing:-.1px;">January</span><span style="position:absolute;top:584px;font-size:12px;line-height:1;font-weight:400;color:#6e7580;white-space:nowrap;left:444px;letter-spacing:-.1px;">February</span><span style="position:absolute;top:584px;font-size:12px;line-height:1;font-weight:400;color:#6e7580;white-space:nowrap;left:549px;letter-spacing:-.1px;">March</span><span style="position:absolute;top:584px;font-size:12px;line-height:1;font-weight:400;color:#6e7580;white-space:nowrap;left:651px;letter-spacing:-.1px;">April</span><span style="position:absolute;top:584px;font-size:12px;line-height:1;font-weight:400;color:#6e7580;white-space:nowrap;left:749px;letter-spacing:-.1px;">May</span><span style="position:absolute;top:584px;font-size:12px;line-height:1;font-weight:400;color:#6e7580;white-space:nowrap;left:845px;letter-spacing:-.1px;">June</span><span style="position:absolute;top:584px;font-size:12px;line-height:1;font-weight:400;color:#6e7580;white-space:nowrap;left:945px;letter-spacing:-.1px;">July</span><span style="position:absolute;top:584px;font-size:12px;line-height:1;font-weight:400;color:#6e7580;white-space:nowrap;left:1034px;letter-spacing:-.1px;">August</span><span style="position:absolute;top:584px;font-size:12px;line-height:1;font-weight:400;color:#6e7580;white-space:nowrap;left:1121px;letter-spacing:-.1px;">September</span><span style="position:absolute;top:584px;font-size:12px;line-height:1;font-weight:400;color:#6e7580;white-space:nowrap;left:1226px;letter-spacing:-.1px;">October</span><span style="position:absolute;top:584px;font-size:12px;line-height:1;font-weight:400;color:#6e7580;white-space:nowrap;left:1318px;letter-spacing:-.1px;">November</span><span style="position:absolute;top:584px;font-size:12px;line-height:1;font-weight:400;color:#6e7580;white-space:nowrap;left:1415px;letter-spacing:-.1px;">December</span><span style="position:absolute;top:620px;font-size:12px;line-height:1;font-weight:400;color:#6e7580;white-space:nowrap;left:698.3px;">5</span><span style="position:absolute;top:620px;font-size:12px;line-height:1;font-weight:400;color:#6e7580;white-space:nowrap;left:728.0999999999999px;letter-spacing:-.2px;">(9)</span><span style="position:absolute;top:620px;font-size:12px;line-height:1;font-weight:400;color:#6e7580;white-space:nowrap;left:805.0px;">4</span><span style="position:absolute;top:620px;font-size:12px;line-height:1;font-weight:400;color:#6e7580;white-space:nowrap;left:834.8px;letter-spacing:-.2px;">(0)</span><span style="position:absolute;top:620px;font-size:12px;line-height:1;font-weight:400;color:#6e7580;white-space:nowrap;left:911.7px;">3</span><span style="position:absolute;top:620px;font-size:12px;line-height:1;font-weight:400;color:#6e7580;white-space:nowrap;left:941.5px;letter-spacing:-.2px;">(0)</span><span style="position:absolute;top:620px;font-size:12px;line-height:1;font-weight:400;color:#6e7580;white-space:nowrap;left:1018.4px;">2</span><span style="position:absolute;top:620px;font-size:12px;line-height:1;font-weight:400;color:#6e7580;white-space:nowrap;left:1048.2px;letter-spacing:-.2px;">(0)</span><span style="position:absolute;top:620px;font-size:12px;line-height:1;font-weight:400;color:#6e7580;white-space:nowrap;left:1125.1px;">1</span><span style="position:absolute;top:620px;font-size:12px;line-height:1;font-weight:400;color:#6e7580;white-space:nowrap;left:1154.8999999999999px;letter-spacing:-.2px;">(0)</span><span style="position:absolute;top:717px;font-size:16px;line-height:1;font-weight:700;color:#e9ebee;white-space:nowrap;left:366.5px;letter-spacing:0.234px;">Top Country reviews</span><span style="position:absolute;top:757px;font-size:14.5px;line-height:1;font-weight:400;color:#fff8ee;white-space:nowrap;left:357.1px;letter-spacing:-0.098px;">66.67%</span><span style="position:absolute;top:757px;font-size:14.5px;line-height:1;font-weight:400;color:#fff8ee;white-space:nowrap;left:533.0px;letter-spacing:-1.372px;">11.11%</span><span style="position:absolute;top:757px;font-size:14.5px;line-height:1;font-weight:400;color:#fff8ee;white-space:nowrap;left:686.3px;letter-spacing:-1.372px;">11.11%</span><span style="position:absolute;top:757px;font-size:14.5px;line-height:1;font-weight:400;color:#fff8ee;white-space:nowrap;left:830.75px;letter-spacing:-1.372px;">11.11%</span><span style="position:absolute;top:757px;font-size:14.5px;line-height:1;font-weight:400;color:#e4e7eb;white-space:nowrap;left:443.3px;letter-spacing:-0.277px;">Germany</span><span style="position:absolute;top:757px;font-size:14.5px;line-height:1;font-weight:400;color:#e4e7eb;white-space:nowrap;left:610.3px;letter-spacing:-0.134px;">Austria</span><span style="position:absolute;top:757px;font-size:14.5px;line-height:1;font-weight:400;color:#e4e7eb;white-space:nowrap;left:763.6px;letter-spacing:-0.144px;">Brazil</span><span style="position:absolute;top:757px;font-size:14.5px;line-height:1;font-weight:400;color:#e4e7eb;white-space:nowrap;left:885.8px;letter-spacing:-0.122px;">Unknown</span><span style="position:absolute;top:79px;font-size:14px;line-height:1;font-weight:700;color:#f1f3f5;white-space:nowrap;left:1315.8px;letter-spacing:-0.599px;">Hi, ossolutionvn</span><span style="position:absolute;top:115px;font-size:14px;line-height:1;font-weight:400;color:#e9ebee;white-space:nowrap;left:1334.1px;letter-spacing:0.392px;-webkit-text-stroke:.5px #e9ebee;">My Account</span><span style="position:absolute;top:150px;font-size:14px;line-height:1;font-weight:400;color:#e9ebee;white-space:nowrap;left:1334.1px;letter-spacing:0.304px;-webkit-text-stroke:.5px #e9ebee;">Subscriptions</span><span style="position:absolute;top:184px;font-size:14px;line-height:1;font-weight:400;color:#e9ebee;white-space:nowrap;left:1333.7px;letter-spacing:0.082px;-webkit-text-stroke:.5px #e9ebee;">Email Marketing</span><span style="position:absolute;top:220px;font-size:14px;line-height:1;font-weight:400;color:#e9ebee;white-space:nowrap;left:1333.7px;letter-spacing:0.118px;-webkit-text-stroke:.5px #e9ebee;">Help Center</span><span style="position:absolute;top:254px;font-size:14px;line-height:1;font-weight:400;color:#e9ebee;white-space:nowrap;left:1333.9px;letter-spacing:0.263px;-webkit-text-stroke:.5px #e9ebee;">Updates</span><span style="position:absolute;top:286px;font-size:14px;line-height:1;font-weight:400;color:#e9ebee;white-space:nowrap;left:1335.3px;letter-spacing:0.029px;-webkit-text-stroke:.5px #e9ebee;">Logout</span><span style="position:absolute;top:315px;font-size:14px;line-height:1;font-weight:400;color:#e9ebee;white-space:nowrap;left:1335.3px;letter-spacing:-0.097px;-webkit-text-stroke:.5px #e9ebee;">Dark Mode</span><span style="position:absolute;top:1003px;font-size:12px;line-height:1;font-weight:400;color:#4a9fdc;white-space:nowrap;left:20.1px;letter-spacing:-0.056px;">Version: 1.5.0</span><span style="position:absolute;top:1003px;font-size:12px;line-height:1;font-weight:400;color:#e6e8ea;white-space:nowrap;left:1167.1px;letter-spacing:0.076px;">© 2022, A2Reviews</span><span style="position:absolute;top:1003px;font-size:12px;line-height:1;font-weight:400;color:#3d9bdc;white-space:nowrap;left:1288.6px;letter-spacing:0.014px;">Docs</span><span style="position:absolute;top:1003px;font-size:12px;line-height:1;font-weight:400;color:#3d9bdc;white-space:nowrap;left:1328.4px;letter-spacing:0.117px;">Blog</span><span style="position:absolute;top:1003px;font-size:12px;line-height:1;font-weight:400;color:#3d9bdc;white-space:nowrap;left:1365.3px;letter-spacing:-0.047px;">Help</span><span style="position:absolute;top:1003px;font-size:12px;line-height:1;font-weight:400;color:#3d9bdc;white-space:nowrap;left:1401.5px;letter-spacing:0.066px;">Affiliates</span><span style="position:absolute;top:1003px;font-size:12px;line-height:1;font-weight:400;color:#f4f5f6;white-space:nowrap;left:1483.2px;letter-spacing:-0.051px;">English</span></div></body></html>
